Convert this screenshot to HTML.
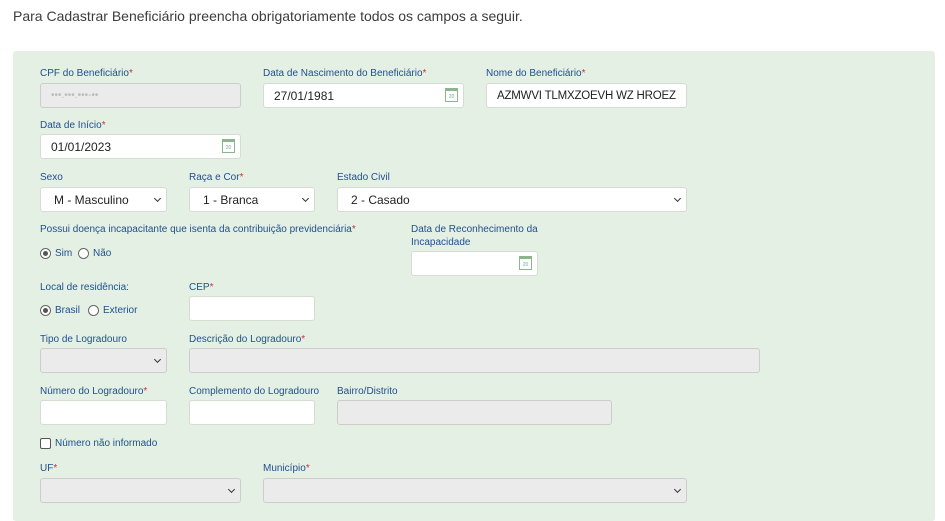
<!DOCTYPE html>
<html><head><meta charset="utf-8"><style>
body{margin:0;width:945px;height:505px;overflow:hidden;background:#fff;font-family:"Liberation Sans",sans-serif;position:relative}
.h{position:absolute;left:13px;top:8px;font-size:14px;color:#3c3c3c}
.p{position:absolute;left:13px;top:51px;width:922px;height:470px;background:#e4f0e4;border-radius:3px}
.l{position:absolute;font-size:10px;color:#1f4f8f;white-space:nowrap;line-height:13px}
.l b{color:#c33;font-weight:normal}
.i{position:absolute;height:23px;background:#fff;border:1px solid #d4dcd4;border-radius:3px;font-size:12px;color:#222;line-height:24px;padding-left:10px;box-sizing:content-box;white-space:nowrap;overflow:hidden}
.d{background:#ebebeb;border-color:#ccc}
.s::after{content:"";position:absolute;right:6px;top:8px;width:4px;height:4px;border-right:1.3px solid #333;border-bottom:1.3px solid #333;transform:rotate(45deg)}
.c{position:absolute;right:5px;top:4px;width:13px;height:14px;border:1px solid #8bb58b;box-sizing:border-box;font-size:5px;color:#7a9;text-align:center;line-height:12px;border-top:3px solid #8bb58b}
.r{position:absolute;width:9px;height:9px;border:1px solid #666;border-radius:50%;background:#fff}
.r.on::after{content:"";position:absolute;left:2px;top:2px;width:5px;height:5px;border-radius:50%;background:#555}
.t{position:absolute;font-size:10px;color:#1f4f8f}
</style></head><body>
<div class="h">Para Cadastrar Beneficiário preencha obrigatoriamente todos os campos a seguir.</div>
<div class="p"></div>
<div class="l" style="left:40px;top:67px">CPF do Beneficiário<b>*</b></div>
<div class="i d" style="left:40px;top:83px;width:189px;color:#bbb;font-size:10px">•••.•••.•••-••</div>
<div class="l" style="left:263px;top:67px">Data de Nascimento do Beneficiário<b>*</b></div>
<div class="i" style="left:263px;top:83px;width:189px">27/01/1981<span class="c">20</span></div>
<div class="l" style="left:486px;top:67px">Nome do Beneficiário<b>*</b></div>
<div class="i" style="left:486px;top:83px;width:189px;font-size:11.5px;letter-spacing:-0.2px">AZMWVI TLMXZOEVH WZ HROEZ</div>
<div class="l" style="left:40px;top:119px">Data de Início<b>*</b></div>
<div class="i" style="left:40px;top:134px;width:189px">01/01/2023<span class="c">20</span></div>
<div class="l" style="left:40px;top:171px">Sexo</div>
<div class="i s" style="left:40px;top:187px;padding-left:13px;width:112px">M - Masculino</div>
<div class="l" style="left:189px;top:171px">Raça e Cor<b>*</b></div>
<div class="i s" style="left:189px;top:187px;width:111px;padding-left:13px">1 - Branca</div>
<div class="l" style="left:337px;top:171px">Estado Civil</div>
<div class="i s" style="left:337px;top:187px;width:335px;padding-left:13px">2 - Casado</div>
<div class="l" style="left:40px;top:223px">Possui doença incapacitante que isenta da contribuição previdenciária<b>*</b></div>
<span class="r on" style="left:40px;top:248px"></span><span class="t" style="left:55px;top:248px">Sim</span>
<span class="r" style="left:78px;top:248px"></span><span class="t" style="left:93px;top:248px">Não</span>
<div class="l" style="left:411px;top:223px">Data de Reconhecimento da<br>Incapacidade</div>
<div class="i" style="left:411px;top:251px;width:115px"><span class="c">20</span></div>
<div class="l" style="left:40px;top:281px">Local de residência:</div>
<span class="r on" style="left:40px;top:305px"></span><span class="t" style="left:55px;top:305px">Brasil</span>
<span class="r" style="left:88px;top:305px"></span><span class="t" style="left:103px;top:305px">Exterior</span>
<div class="l" style="left:189px;top:281px">CEP<b>*</b></div>
<div class="i" style="left:189px;top:296px;width:114px"></div>
<div class="l" style="left:40px;top:333px">Tipo de Logradouro</div>
<div class="i d s" style="left:40px;top:348px;width:115px"></div>
<div class="l" style="left:189px;top:333px">Descrição do Logradouro<b>*</b></div>
<div class="i d" style="left:189px;top:348px;width:559px"></div>
<div class="l" style="left:40px;top:385px">Número do Logradouro<b>*</b></div>
<div class="i" style="left:40px;top:400px;width:115px"></div>
<div class="l" style="left:189px;top:385px">Complemento do Logradouro</div>
<div class="i" style="left:189px;top:400px;width:114px"></div>
<div class="l" style="left:337px;top:385px">Bairro/Distrito</div>
<div class="i d" style="left:337px;top:400px;width:263px"></div>
<span style="position:absolute;left:40px;top:438px;width:9px;height:9px;border:1px solid #555;border-radius:2px;background:#fff"></span>
<span class="t" style="left:55px;top:438px">Número não informado</span>
<div class="l" style="left:40px;top:462px">UF<b>*</b></div>
<div class="i d s" style="left:40px;top:478px;width:189px"></div>
<div class="l" style="left:263px;top:462px">Município<b>*</b></div>
<div class="i d s" style="left:263px;top:478px;width:412px"></div>
</body></html>
